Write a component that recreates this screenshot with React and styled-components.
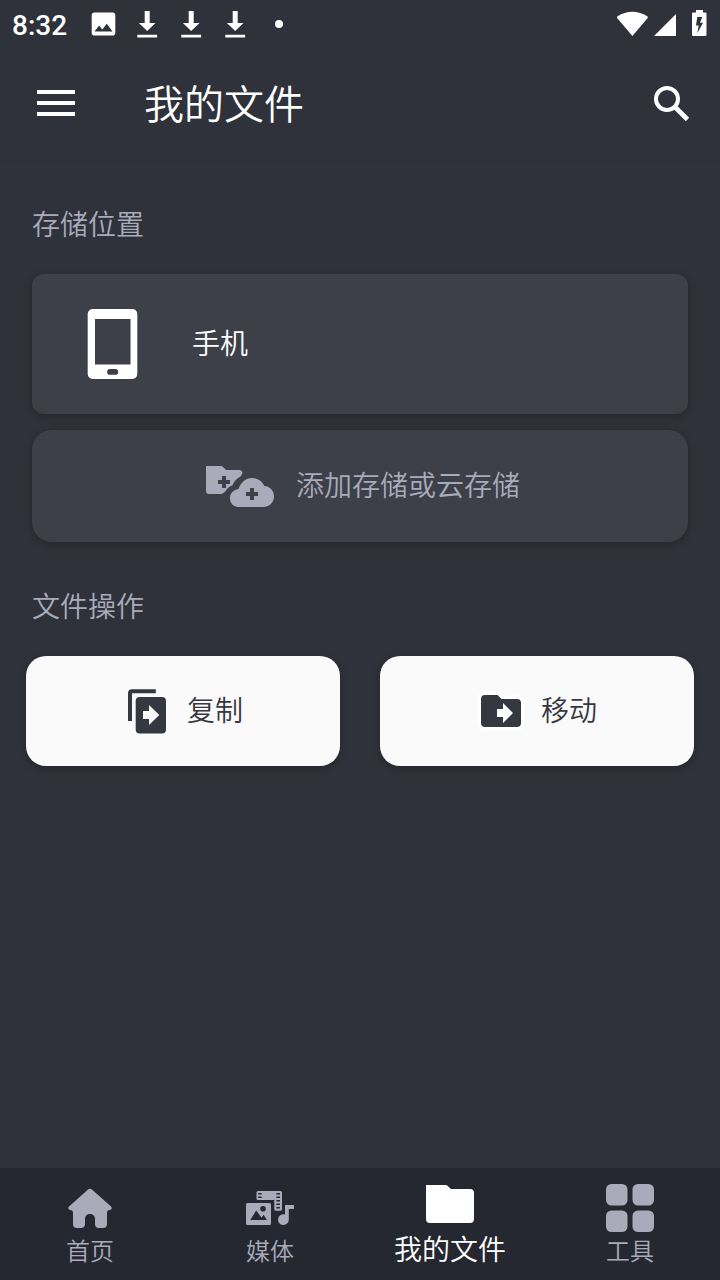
import styled, { createGlobalStyle } from "styled-components";

const GlobalStyle = createGlobalStyle`
  * {
    box-sizing: border-box;
  }
  body {
    margin: 0;
    background: #2f323a;
    font-family: "Noto Sans CJK SC", sans-serif;
    font-weight: 350;
  }
  button {
    border: 0;
    padding: 0;
    background: none;
    color: inherit;
    font: inherit;
    cursor: pointer;
  }
  svg {
    display: block;
    flex: none;
  }
`;

const Page = styled.div`
  min-height: 100vh;
  display: flex;
  flex-direction: column;
  color: #ffffff;
`;

const StatusBar = styled.div`
  height: 48px;
  padding: 0 8px 0 12px;
  display: flex;
  align-items: center;
  justify-content: space-between;
`;

const StatusGroup = styled.div`
  display: flex;
  align-items: center;
  gap: ${({ $gap }) => $gap}px;
`;

const Clock = styled.time`
  width: 61px;
  font-family: Roboto, sans-serif;
  font-size: 28px;
  font-weight: 500;
  line-height: 32px;
  padding-top: 4px;
`;

const Header = styled.header`
  height: 112px;
  padding: 0 28px 0 36px;
  display: flex;
  align-items: center;
  box-shadow: 0 1px 2px rgba(0, 0, 0, 0.15);
`;

const Title = styled.h1`
  flex: 1;
  margin: 0 0 0 68px;
  padding-bottom: 4px;
  font-size: 40px;
  font-weight: 350;
  line-height: 48px;
`;

const Main = styled.main`
  flex: 1;
  padding: 0 26px;
`;

const SectionTitle = styled.h2`
  margin: 0 6px;
  padding: 43px 0 31px;
  color: #a9abba;
  font-size: 28px;
  font-weight: 350;
  line-height: 40px;
`;

const StorageList = styled.div`
  margin: 0 6px;
  display: flex;
  flex-direction: column;
  gap: 16px;
`;

const Card = styled.button`
  display: flex;
  align-items: center;
  box-shadow: 0 2px 8px rgba(0, 0, 0, 0.25);
`;

const CardLabel = styled.span`
  padding-bottom: 4px;
  font-size: 28px;
  line-height: 40px;
`;

const StorageCard = styled(Card)`
  height: 140px;
  padding: 0 54px;
  gap: 54px;
  border-radius: 12px;
  background: #3e4049;
`;

const AddCard = styled(Card)`
  height: 112px;
  justify-content: center;
  gap: 16px;
  border-radius: 20px;
  background: #3e4049;
  color: #a9abba;
`;

const Actions = styled.div`
  display: grid;
  grid-template-columns: 1fr 1fr;
  gap: 40px;
`;

const ActionCard = styled(Card)`
  height: 110px;
  justify-content: center;
  gap: 16px;
  border-radius: 20px;
  background: #fafafa;
  color: #353741;
`;

const BottomNav = styled.nav`
  height: 112px;
  display: grid;
  grid-template-columns: repeat(4, 1fr);
  background: #252831;
`;

const NavItem = styled.a`
  padding-top: 16px;
  display: flex;
  flex-direction: column;
  align-items: center;
  color: ${({ $active }) => ($active ? "#ffffff" : "#a9abba")};
  font-size: ${({ $active }) => ($active ? 28 : 24)}px;
  line-height: ${({ $active }) => ($active ? 32 : 36)}px;
  text-decoration: none;
`;

const Icon = ({ w, h = w, children }) => (
  <svg width={w} height={h} viewBox={`0 0 ${w} ${h}`} fill="currentColor" aria-hidden="true">
    {children}
  </svg>
);

const PictureIcon = () => (
  <Icon w={28} h={32}>
    <path
      fillRule="evenodd"
      d="M5.500 4.500h18a2.800 2.800 0 0 1 2.800 2.800v17.400a2.800 2.800 0 0 1-2.800 2.800h-18a2.800 2.800 0 0 1-2.800-2.800V7.300a2.800 2.800 0 0 1 2.800-2.800zM5.500 23.500h18l-5.700-7.800-4.500 5.800-3.200-3.900z"
    />
  </Icon>
);

const DownloadIcon = () => (
  <Icon w={28} h={32}>
    <path d="M11.700 3h5v12h5.800L14.200 23l-8.300-8h5.800zM4.300 26.700h19.800v2.800H4.300z" />
  </Icon>
);

const DotIcon = () => (
  <Icon w={28} h={32}>
    <circle cx="14" cy="16" r="4" />
  </Icon>
);

const WifiIcon = () => (
  <Icon w={32}>
    <path d="M16.400 28 1.300 10.300C.7 9.500.8 8.700 1.600 8.200 10.500 2.200 22.300 2.200 31.200 8.200c.8.500.9 1.300.3 2.100z" />
  </Icon>
);

const SignalIcon = () => (
  <Icon w={32}>
    <path d="M2 28 24 6v22z" />
  </Icon>
);

const BatteryIcon = () => (
  <Icon w={24} h={32}>
    <path
      fillRule="evenodd"
      d="M8 2h7v2.500h2.200a1.300 1.300 0 0 1 1.300 1.300v20.900a1.300 1.300 0 0 1-1.300 1.300H5.300A1.300 1.300 0 0 1 4 26.700V5.800a1.300 1.300 0 0 1 1.300-1.300H8zM9.300 9l-1.300 8.500h2.700l-1.400 7.700L15 14.800h-3L14.200 9z"
    />
  </Icon>
);

const MenuIcon = () => (
  <Icon w={40}>
    <path d="M1 6h38v4H1zM1 17h38v4H1zM1 28h38v4H1z" />
  </Icon>
);

const SearchIcon = () => (
  <Icon w={40}>
    <g fill="none" stroke="currentColor" strokeWidth="4">
      <circle cx="15" cy="15" r="11" />
      <path d="M23.500 23.500 35.500 35.500" strokeWidth="4.600" />
    </g>
  </Icon>
);

const PhoneIcon = () => (
  <Icon w={52} h={72}>
    <path
      fillRule="evenodd"
      d="M6.700 1h39.600a5 5 0 0 1 5 5v60a5 5 0 0 1-5 5H6.700a5 5 0 0 1-5-5V6a5 5 0 0 1 5-5zM9 11v45.500h35.500V11zM24 61a2.800 2.800 0 0 0 0 5.800h5.300a2.800 2.800 0 0 0 0-5.800z"
    />
  </Icon>
);

const AddStorageIcon = () => (
  <Icon w={80} h={48}>
    <path
      fillRule="evenodd"
      d="M6 4h14.500c1.300 0 2 .4 2.800 1.200L26 8h13c3 0 4.200 2.500 2.700 4.800l-1.200 1.800c-3.500 1.600-6.300 4.600-8 8.600-3 .9-5.500 3-6.700 5.500-1.600 1.600-2.800 3.300-5 3.300H9a3 3 0 0 1-3-3zM22 14v4h-4v4h4v4h4v-4h4v-4h-4v-4z"
    />
    <path
      fillRule="evenodd"
      d="M52 16c5.600 0 10.200 3 12.400 8C70 24.500 74 29 74 34.300 74 40.300 69.600 45 63.500 45H38.500C33.500 45 30 41.300 30 36.300c0-4.800 3.500-8.500 8.500-9.200C41 20 45.500 16 52 16zM50 26v4h-4v4h4v4h4v-4h4v-4h-4v-4z"
    />
  </Icon>
);

const CopyIcon = () => (
  <Icon w={48}>
    <g fill="#353741">
      <path d="M9 2.300h23.800v4H9V34H5V6.300a4 4 0 0 1 4-4z" />
      <rect x="12.700" y="10" width="30.300" height="36.500" rx="4" />
    </g>
    <path fill="#fafafa" d="M20 24h6v-6l10.300 10L26 38v-6h-6z" />
  </Icon>
);

const MoveIcon = () => (
  <Icon w={48}>
    <path
      fill="#353741"
      stroke="#ffffff"
      strokeWidth="7"
      strokeLinejoin="round"
      paintOrder="stroke"
      d="M8 8h12.500L24.500 12H40a4 4 0 0 1 4 4v20a4 4 0 0 1-4 4H8a4 4 0 0 1-4-4V12a4 4 0 0 1 4-4z"
    />
    <path fill="#ffffff" d="M20 22h6v-6l10 10-10 10v-6h-6z" />
  </Icon>
);

const HomeIcon = () => (
  <Icon w={48}>
    <path d="M21.800 5.700a3.300 3.300 0 0 1 4.400 0L45 22.500c1.400 1.300.7 3.300-1.200 3.500-2 .2-2.800 1-2.800 3V40a4 4 0 0 1-4 4h-4a4 4 0 0 1-4-4v-5c0-3-2-5-5-5s-5 2-5 5v5a4 4 0 0 1-4 4h-4a4 4 0 0 1-4-4V29c0-2-.8-2.800-2.800-3-1.900-.2-2.600-2.200-1.200-3.500z" />
  </Icon>
);

const MediaIcon = () => (
  <Icon w={48}>
    <path
      fillRule="evenodd"
      d="M12 7h22.500a1.500 1.500 0 0 1 1.500 1.500v16.800a1.500 1.500 0 0 1-1.500 1.500h-4.700a1.500 1.500 0 0 1-1.500-1.500V16H12a1.500 1.500 0 0 1-1.500-1.500v-6A1.500 1.500 0 0 1 12 7zM12.200 9v1.600h3.500V9zM12.200 12.500v1.600h3.500v-1.600zM30.300 9v1.600H34V9zM30.300 12.500v1.600H34v-1.600zM30.300 16v1.600H34V16zM30.300 19.500v1.600H34v-1.600zM30.300 23v1.600H34V23z"
    />
    <path
      fillRule="evenodd"
      d="M1.500 19h22A1.500 1.500 0 0 1 25 20.500v19a1.500 1.500 0 0 1-1.500 1.500h-22A1.500 1.500 0 0 1 0 39.500v-19A1.500 1.500 0 0 1 1.500 19zM17 22a2.800 2.800 0 1 0 0 5.600 2.800 2.800 0 0 0 0-5.600zM4.300 36h16.600l-3.300-5.200-2 3L10.200 26.500z"
    />
    <path d="M39 21h9v4h-5.200v10.500A5.400 5.400 0 1 1 39 30.500z" />
  </Icon>
);

const FolderIcon = () => (
  <Icon w={48}>
    <path d="M0 1h19.500c1 0 1.700.3 2.300 1L25 5h19a4 4 0 0 1 4 4v26a4 4 0 0 1-4 4H4a4 4 0 0 1-4-4z" />
  </Icon>
);

const ToolsIcon = () => (
  <Icon w={48}>
    <rect width="21.500" height="21.500" rx="5.500" />
    <rect x="26.500" width="21.500" height="21.500" rx="5.500" />
    <rect y="26.500" width="21.500" height="21.500" rx="5.500" />
    <rect x="26.500" y="26.500" width="21.500" height="21.500" rx="5.500" />
  </Icon>
);

const tabs = [
  { id: "home", label: "首页", icon: <HomeIcon /> },
  { id: "media", label: "媒体", icon: <MediaIcon /> },
  { id: "files", label: "我的文件", icon: <FolderIcon />, active: true },
  { id: "tools", label: "工具", icon: <ToolsIcon /> },
];

const App = () => {
  return (
    <Page lang="zh-CN">
      <GlobalStyle />
      <StatusBar>
        <StatusGroup $gap={16}>
          <Clock>8:32</Clock>
          <PictureIcon />
          <DownloadIcon />
          <DownloadIcon />
          <DownloadIcon />
          <DotIcon />
        </StatusGroup>
        <StatusGroup $gap={4}>
          <WifiIcon />
          <SignalIcon />
          <BatteryIcon />
        </StatusGroup>
      </StatusBar>
      <Header>
        <button type="button" aria-label="菜单">
          <MenuIcon />
        </button>
        <Title>我的文件</Title>
        <button type="button" aria-label="搜索">
          <SearchIcon />
        </button>
      </Header>
      <Main>
        <SectionTitle>存储位置</SectionTitle>
        <StorageList>
          <StorageCard type="button">
            <PhoneIcon />
            <CardLabel>手机</CardLabel>
          </StorageCard>
          <AddCard type="button">
            <AddStorageIcon />
            <CardLabel>添加存储或云存储</CardLabel>
          </AddCard>
        </StorageList>
        <SectionTitle>文件操作</SectionTitle>
        <Actions>
          <ActionCard type="button">
            <CopyIcon />
            <CardLabel>复制</CardLabel>
          </ActionCard>
          <ActionCard type="button">
            <MoveIcon />
            <CardLabel>移动</CardLabel>
          </ActionCard>
        </Actions>
      </Main>
      <BottomNav>
        {tabs.map((tab) => (
          <NavItem
            key={tab.id}
            href={`#${tab.id}`}
            $active={tab.active}
            aria-current={tab.active ? "page" : undefined}
          >
            {tab.icon}
            {tab.label}
          </NavItem>
        ))}
      </BottomNav>
    </Page>
  );
};

export default App;
